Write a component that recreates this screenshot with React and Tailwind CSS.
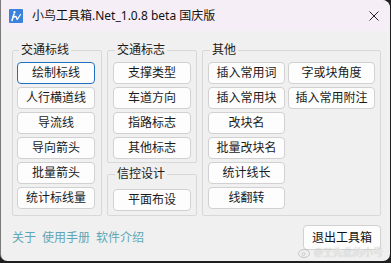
import React from 'react';

const font = { fontFamily: '"Noto Sans", "Noto Sans CJK SC", sans-serif' };

const Btn = ({ children, focused, className = '' }) => (
  <button
    className={`h-[22px] rounded-[4px] border bg-[#fdfdfd] text-[12px] leading-none text-[#1b1b1b] ${
      focused ? 'border-[#1f6fc5]' : 'border-[#d1d1d1]'
    } ${className}`}
  >
    {children}
  </button>
);

const Group = ({ title, className = '', children }) => (
  <fieldset className={`border border-[#d8d8d8] rounded-[2px] pt-[4px] ${className}`}>
    <legend className="ml-[2px] px-[2px] text-[12px] leading-[16px] text-[#1b1b1b]">{title}</legend>
    {children}
  </fieldset>
);

const AppIcon = () => (
  <svg width="14" height="14" viewBox="0 0 14 14">
    <rect width="14" height="14" rx="1" fill="#3a82dc" />
    <circle cx="5.5" cy="3.2" r="1.1" fill="#fff" />
    <path d="M5 5 L3 11.5" stroke="#fff" strokeWidth="1.6" strokeLinecap="round" />
    <path d="M4.2 8 L7 7.5 L8.2 10.5 L11.5 5.5" stroke="#fff" strokeWidth="1.3" fill="none" strokeLinecap="round" strokeLinejoin="round" />
  </svg>
);

export default function App() {
  return (
    <div className="w-[391px] h-[263px] bg-[#1f1f1f]" style={font}>
      <div className="w-[390px] h-[261px] bg-[#f0f0f0] rounded-tr-[8px] rounded-b-[7px] border-l border-[#7a7a7a] overflow-hidden relative">
        <div className="h-[31px] bg-[#f6eef6] flex items-center pl-[8px] pr-[10px]">
          <AppIcon />
          <span className="ml-[9px] text-[12px] text-[#111]">小鸟工具箱.Net_1.0.8 beta 国庆版</span>
          <svg className="ml-auto mr-[1px]" width="10" height="10" viewBox="0 0 10 10">
            <path d="M0.5 0.5 L9.5 9.5 M9.5 0.5 L0.5 9.5" stroke="#222" strokeWidth="1" />
          </svg>
        </div>

        <div className="flex gap-[5px] pl-[11px] pt-[11px]">
          <Group title="交通标线" className="w-[90px] pl-[4px] pb-[4px]">
            <div className="flex flex-col gap-[3px]">
              <Btn focused className="w-[78px]">绘制标线</Btn>
              <Btn className="w-[78px]">人行横道线</Btn>
              <Btn className="w-[78px]">导流线</Btn>
              <Btn className="w-[78px]">导向箭头</Btn>
              <Btn className="w-[78px]">批量箭头</Btn>
              <Btn className="w-[78px]">统计标线量</Btn>
            </div>
          </Group>

          <div className="flex flex-col gap-[3px]">
            <Group title="交通标志" className="w-[90px] pl-[5px] pb-[3px]">
              <div className="flex flex-col gap-[3px]">
                <Btn className="w-[78px]">支撑类型</Btn>
                <Btn className="w-[78px]">车道方向</Btn>
                <Btn className="w-[78px]">指路标志</Btn>
                <Btn className="w-[78px]">其他标志</Btn>
              </div>
            </Group>
            <Group title="信控设计" className="w-[90px] pl-[5px] pb-[4px]">
              <Btn className="w-[78px]">平面布设</Btn>
            </Group>
          </div>

          <Group title="其他" className="w-[179px] pl-[5px] pb-[4px]">
            <div className="flex gap-[3px]">
              <div className="flex flex-col gap-[3px]">
                <Btn className="w-[77px]">插入常用词</Btn>
                <Btn className="w-[77px]">插入常用块</Btn>
                <Btn className="w-[77px]">改块名</Btn>
                <Btn className="w-[77px]">批量改块名</Btn>
                <Btn className="w-[77px]">统计线长</Btn>
                <Btn className="w-[77px]">线翻转</Btn>
              </div>
              <div className="flex flex-col gap-[3px]">
                <Btn className="w-[87px]">字或块角度</Btn>
                <Btn className="w-[87px]">插入常用附注</Btn>
              </div>
            </div>
          </Group>
        </div>

        <div className="flex items-center pl-[11px] pr-[9px] mt-[9px]">
          <div className="flex gap-[6px] text-[12px] text-[#5ea6b6]">
            <span>关于</span>
            <span>使用手册</span>
            <span>软件介绍</span>
          </div>
          <button className="ml-auto w-[78px] h-[25px] rounded-[4px] border border-[#d1d1d1] bg-[#fdfdfd] text-[12px] text-[#111]">
            退出工具箱
          </button>
        </div>

        <div className="absolute left-[297px] top-[246px] flex items-center gap-[2px] text-[10px] leading-[12px] opacity-80">
          <svg width="14" height="11" viewBox="0 0 14 11">
            <ellipse cx="6" cy="6.5" rx="5.5" ry="4" fill="none" stroke="#bbb" strokeWidth="1" />
            <circle cx="5.5" cy="7" r="1.5" fill="none" stroke="#bbb" strokeWidth="0.8" />
          </svg>
          <span className="text-[#e8e8e8] [text-shadow:0_0_1px_#aaa]">@王先此的小号</span>
        </div>
      </div>
    </div>
  );
}
